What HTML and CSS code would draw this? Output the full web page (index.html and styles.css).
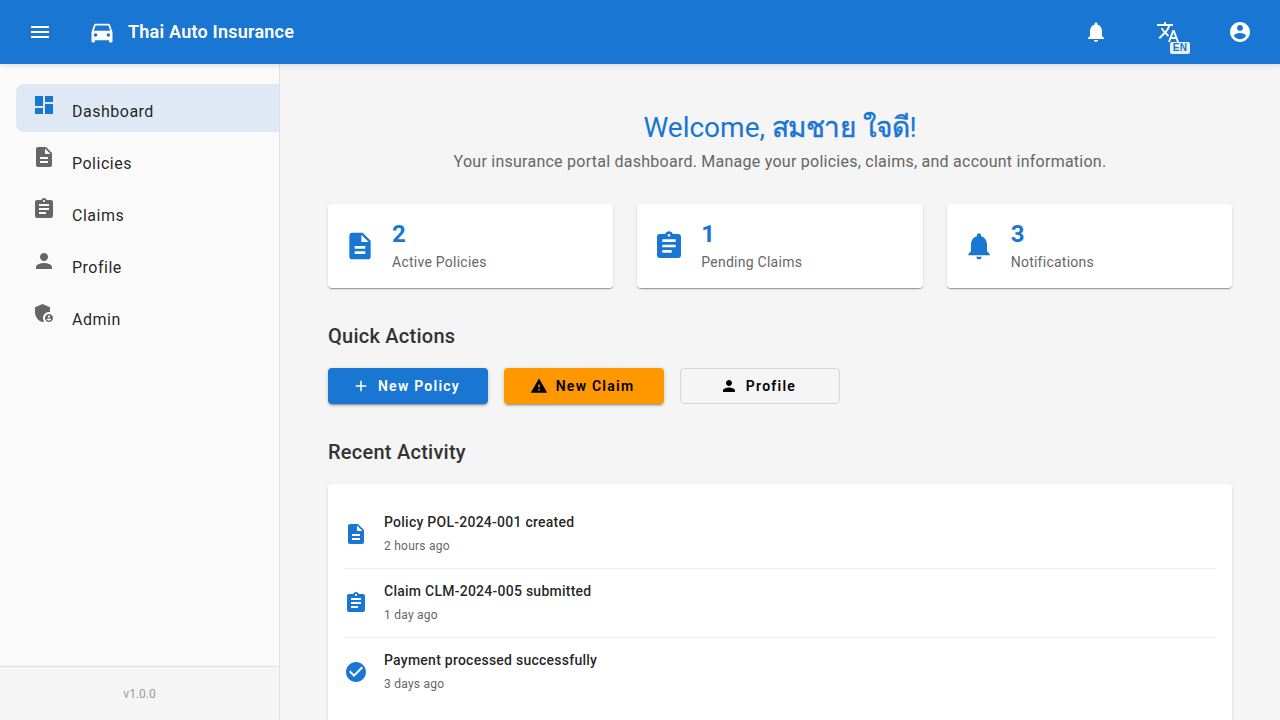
FILE: index.html
```html
<!DOCTYPE html>
<html lang="en">
<head>
<meta charset="utf-8">
<title>Thai Auto Insurance</title>
<link rel="stylesheet" href="styles.css">
</head>
<body>
<svg class="sprite" aria-hidden="true">
  <symbol id="menu" viewBox="0 0 24 24"><path d="M3 18h18v-2H3v2zm0-5h18v-2H3v2zm0-7v2h18V6H3z"/></symbol>
  <symbol id="car" viewBox="0 0 24 24"><path d="M18.92 6.01C18.72 5.42 18.16 5 17.5 5h-11c-.66 0-1.21.42-1.42 1.01L3 12v8c0 .55.45 1 1 1h1c.55 0 1-.45 1-1v-1h12v1c0 .55.45 1 1 1h1c.55 0 1-.45 1-1v-8l-2.08-5.99zM6.500 16c-.83 0-1.500-.67-1.500-1.500S5.670 13 6.500 13s1.500.67 1.500 1.500S7.330 16 6.500 16zm11 0c-.83 0-1.500-.67-1.500-1.500s.67-1.500 1.500-1.500 1.500.67 1.500 1.500-.67 1.500-1.500 1.500zM5 11l1.500-4.500h11L19 11H5z"/></symbol>
  <symbol id="bell" viewBox="0 0 24 24"><path d="M12 22c1.1 0 2-.9 2-2h-4c0 1.1.89 2 2 2zm6-6v-5c0-3.070-1.640-5.640-4.500-6.320V4c0-.83-.67-1.500-1.500-1.500s-1.500.67-1.500 1.500v.68C7.630 5.360 6 7.920 6 11v5l-2 2v1h16v-1l-2-2z"/></symbol>
  <symbol id="translate" viewBox="0 0 24 24"><path d="M12.870 15.070l-2.540-2.510.03-.03c1.740-1.940 2.980-4.170 3.710-6.530H17V4h-7V2H8v2H1v1.990h11.170C11.500 7.920 10.440 9.750 9 11.350 8.070 10.320 7.300 9.190 6.690 8h-2c.73 1.630 1.730 3.170 2.980 4.560l-5.090 5.020L4 19l5-5 3.110 3.110.76-2.040zM18.500 10h-2L12 22h2l1.120-3h4.750L21 22h2l-4.500-12zm-2.620 7l1.620-4.330L19.120 17h-3.240z"/></symbol>
  <symbol id="account" viewBox="0 0 24 24"><path d="M12 2C6.480 2 2 6.480 2 12s4.480 10 10 10 10-4.480 10-10S17.520 2 12 2zm0 3c1.660 0 3 1.340 3 3s-1.340 3-3 3-3-1.340-3-3 1.340-3 3-3zm0 14.200c-2.500 0-4.710-1.280-6-3.220.03-1.990 4-3.080 6-3.080 1.990 0 5.970 1.090 6 3.080-1.290 1.940-3.500 3.220-6 3.220z"/></symbol>
  <symbol id="dashboard" viewBox="0 0 24 24"><path d="M3 13h8V3H3v10zm0 8h8v-6H3v6zm10 0h8V11h-8v10zm0-18v6h8V3h-8z"/></symbol>
  <symbol id="document" viewBox="0 0 24 24"><path d="M14 2H6c-1.100 0-1.990.9-1.990 2L4 20c0 1.100.89 2 1.990 2H18c1.100 0 2-.9 2-2V8l-6-6zm2 16H8v-2h8v2zm0-4H8v-2h8v2zm-3-5V3.500L18.500 9H13z"/></symbol>
  <symbol id="clipboard" viewBox="0 0 24 24"><path d="M19 3h-4.180C14.400 1.840 13.300 1 12 1c-1.300 0-2.400.84-2.820 2H5c-1.100 0-2 .9-2 2v14c0 1.100.9 2 2 2h14c1.100 0 2-.9 2-2V5c0-1.100-.9-2-2-2zm-7 0c.55 0 1 .45 1 1s-.45 1-1 1-1-.45-1-1 .45-1 1-1zm2 14H7v-2h7v2zm3-4H7v-2h10v2zm0-4H7V7h10v2z"/></symbol>
  <symbol id="person" viewBox="0 0 24 24"><path d="M12 12c2.210 0 4-1.790 4-4s-1.790-4-4-4-4 1.790-4 4 1.790 4 4 4zm0 2c-2.670 0-8 1.340-8 4v2h16v-2c0-2.660-5.330-4-8-4z"/></symbol>
  <symbol id="admin" viewBox="0 0 24 24"><path d="M17 11c.34 0 .67.04 1 .09V6.270L10.500 3 3 6.270v4.910c0 4.540 3.200 8.790 7.500 9.820.55-.13 1.080-.32 1.600-.55-.69-.98-1.100-2.170-1.100-3.450 0-3.310 2.690-6 6-6z"/><path d="M17 13c-2.210 0-4 1.790-4 4s1.790 4 4 4 4-1.790 4-4-1.790-4-4-4zm0 1.380c.62 0 1.120.51 1.120 1.120s-.51 1.120-1.120 1.120-1.120-.51-1.120-1.120.5-1.120 1.120-1.120zm0 5.370c-.93 0-1.740-.46-2.240-1.170.05-.72 1.510-1.080 2.240-1.080s2.190.36 2.240 1.080c-.5.71-1.310 1.170-2.240 1.170z"/></symbol>
  <symbol id="plus" viewBox="0 0 24 24"><path d="M19 13h-6v6h-2v-6H5v-2h6V5h2v6h6v2z"/></symbol>
  <symbol id="warning" viewBox="0 0 24 24"><path d="M1 21h22L12 2 1 21zm12-3h-2v-2h2v2zm0-4h-2v-4h2v4z"/></symbol>
  <symbol id="check" viewBox="0 0 24 24"><path d="M12 2C6.480 2 2 6.480 2 12s4.480 10 10 10 10-4.480 10-10S17.520 2 12 2zm-2 15l-5-5 1.410-1.410L10 14.170l7.590-7.590L19 8l-9 9z"/></symbol>
</svg>

<div class="app">
  <header class="toolbar">
    <button class="icon-button" aria-label="Menu"><svg class="icon"><use href="#menu"/></svg></button>
    <div class="brand"><svg class="icon brand-icon"><use href="#car"/></svg><span>Thai Auto Insurance</span></div>
    <div class="toolbar-actions">
      <button class="icon-button" aria-label="Notifications"><svg class="icon"><use href="#bell"/></svg></button>
      <button class="icon-button" aria-label="Language"><svg class="icon"><use href="#translate"/></svg><span class="lang-badge">EN</span></button>
      <button class="icon-button" aria-label="Account"><svg class="icon"><use href="#account"/></svg></button>
    </div>
  </header>

  <div class="body">
    <aside class="sidebar">
      <nav class="nav">
        <a class="nav-item active"><svg class="icon"><use href="#dashboard"/></svg><span>Dashboard</span></a>
        <a class="nav-item"><svg class="icon"><use href="#document"/></svg><span>Policies</span></a>
        <a class="nav-item"><svg class="icon"><use href="#clipboard"/></svg><span>Claims</span></a>
        <a class="nav-item"><svg class="icon"><use href="#person"/></svg><span>Profile</span></a>
        <a class="nav-item"><svg class="icon"><use href="#admin"/></svg><span>Admin</span></a>
      </nav>
      <div class="sidebar-footer">v1.0.0</div>
    </aside>

    <main class="content">
      <section class="welcome">
        <h1>Welcome, <span class="user-name" lang="th">สมชาย ใจดี</span>!</h1>
        <p>Your insurance portal dashboard. Manage your policies, claims, and account information.</p>
      </section>

      <section class="stats">
        <div class="card stat"><svg class="icon stat-icon"><use href="#document"/></svg><div><div class="stat-value">2</div><div class="stat-label">Active Policies</div></div></div>
        <div class="card stat"><svg class="icon stat-icon"><use href="#clipboard"/></svg><div><div class="stat-value">1</div><div class="stat-label">Pending Claims</div></div></div>
        <div class="card stat"><svg class="icon stat-icon"><use href="#bell"/></svg><div><div class="stat-value">3</div><div class="stat-label">Notifications</div></div></div>
      </section>

      <section class="section">
        <h2>Quick Actions</h2>
        <div class="actions">
          <button class="button primary"><svg class="icon"><use href="#plus"/></svg><span>New Policy</span></button>
          <button class="button accent"><svg class="icon"><use href="#warning"/></svg><span>New Claim</span></button>
          <button class="button outlined"><svg class="icon"><use href="#person"/></svg><span>Profile</span></button>
        </div>
      </section>

      <section class="section">
        <h2>Recent Activity</h2>
        <div class="card activity">
          <div class="activity-item"><svg class="icon"><use href="#document"/></svg><div><div class="activity-title">Policy POL-2024-001 created</div><div class="activity-time">2 hours ago</div></div></div>
          <div class="activity-item"><svg class="icon"><use href="#clipboard"/></svg><div><div class="activity-title">Claim CLM-2024-005 submitted</div><div class="activity-time">1 day ago</div></div></div>
          <div class="activity-item"><svg class="icon"><use href="#check"/></svg><div><div class="activity-title">Payment processed successfully</div><div class="activity-time">3 days ago</div></div></div>
        </div>
      </section>
    </main>
  </div>
</div>
</body>
</html>
```
FILE: styles.css
```css
* { box-sizing: border-box; }

body {
  margin: 0;
  font-family: Roboto, "Noto Sans", sans-serif;
  background: #f5f5f5;
  color: rgba(0, 0, 0, 0.87);
  overflow: hidden;
}

h1, h2, p { margin: 0; }
button { font: inherit; }

.sprite { display: none; }

.icon {
  display: block;
  flex: none;
  width: 24px;
  height: 24px;
  fill: currentColor;
}

.app {
  display: flex;
  flex-direction: column;
  height: 100vh;
}

.toolbar {
  display: flex;
  align-items: center;
  flex: none;
  height: 64px;
  padding: 0 16px;
  background: #1976d2;
  color: #fff;
  box-shadow: 0 2px 4px rgba(0, 0, 0, 0.1);
  z-index: 1;
}

.icon-button {
  position: relative;
  display: flex;
  align-items: center;
  justify-content: center;
  width: 48px;
  height: 48px;
  padding: 0;
  border: 0;
  background: none;
  color: inherit;
}

.brand {
  display: flex;
  align-items: center;
  gap: 12px;
  margin-left: 24px;
  font-size: 18px;
  font-weight: 600;
  line-height: 28px;
  letter-spacing: 0.22px;
}

.brand-icon { width: 28px; height: 28px; }

.toolbar-actions {
  display: flex;
  gap: 24px;
  margin-left: auto;
}

.lang-badge {
  position: absolute;
  right: 2px;
  bottom: 2px;
  width: 20px;
  padding: 1px 0;
  border-radius: 2px;
  background: rgba(255, 255, 255, 0.9);
  color: #1976d2;
  font-family: "Liberation Sans", Arial, sans-serif;
  font-size: 10px;
  font-weight: 700;
  line-height: 10px;
  letter-spacing: 0.2px;
  text-align: center;
}

.body {
  display: flex;
  flex: 1;
  min-height: 0;
}

.sidebar {
  display: flex;
  flex-direction: column;
  flex: none;
  width: 280px;
  border-right: 1px solid #e0e0e0;
  background: #fafafa;
}

.nav {
  display: flex;
  flex-direction: column;
  flex: 1;
  gap: 4px;
  padding: 20px 0 0 16px;
}

.nav-item {
  display: flex;
  align-items: flex-start;
  gap: 16px;
  height: 48px;
  padding: 9px 16px 0;
  border-radius: 8px 0 0 8px;
  font-size: 16px;
  line-height: 24px;
  letter-spacing: 0.5px;
}

.nav-item span { padding-top: 7px; }
.nav-item .icon { color: #666; }
.nav-item.active { background: #dfe9f5; }
.nav-item.active .icon { color: #1976d2; }

.sidebar-footer {
  height: 54px;
  border-top: 1px solid #e0e0e0;
  background: #f5f5f5;
  color: #999;
  font-size: 12px;
  line-height: 55px;
  text-align: center;
}

.content {
  flex: 1;
  min-width: 0;
  padding: 44px 48px 0;
}

.welcome { text-align: center; }

.welcome h1 {
  height: 40px;
  color: #1976d2;
  font-size: 28px;
  font-weight: 400;
  line-height: 40px;
}

.user-name {
  letter-spacing: -0.5px;
  word-spacing: 1px;
  -webkit-text-stroke: 0.5px currentColor;
}

.welcome p {
  margin-top: 2px;
  color: #666;
  font-size: 16px;
  line-height: 24px;
  letter-spacing: 0.25px;
}

.stats {
  display: grid;
  grid-template-columns: repeat(3, 1fr);
  gap: 24px;
  margin-top: 30px;
}

.card {
  border-radius: 4px;
  background: #fff;
  box-shadow: 0 2px 1px -1px rgba(0, 0, 0, 0.2), 0 1px 1px rgba(0, 0, 0, 0.14), 0 1px 3px rgba(0, 0, 0, 0.12);
}

.stat {
  display: flex;
  align-items: center;
  gap: 16px;
  height: 84px;
  padding: 0 16px;
}

.stat-icon { width: 32px; height: 32px; color: #1976d2; }

.stat-value {
  color: #1976d2;
  font-size: 24px;
  font-weight: 700;
  line-height: 32px;
}

.stat-label {
  margin: 2px 0;
  color: #666;
  font-size: 14px;
  line-height: 20px;
  letter-spacing: 0.25px;
}

.section { margin-top: 32px; }

.section h2 {
  color: #333;
  font-size: 20px;
  font-weight: 500;
  line-height: 32px;
  letter-spacing: 0.25px;
}

.actions { display: flex; gap: 16px; margin-top: 16px; }

.button {
  display: flex;
  align-items: center;
  justify-content: center;
  gap: 8px;
  width: 160px;
  height: 36px;
  padding: 0 16px;
  border: 0;
  border-radius: 4px;
  font-size: 14px;
  font-weight: 600;
  letter-spacing: 1.25px;
  box-shadow: 0 3px 1px -2px rgba(0, 0, 0, 0.2), 0 2px 2px rgba(0, 0, 0, 0.14), 0 1px 5px rgba(0, 0, 0, 0.12);
}

.button .icon { width: 18px; height: 18px; margin-left: -4px; }
.primary { background: #1976d2; color: #fff; }
.accent { background: #ff9800; color: #000; }
.outlined { border: 1px solid #d6d6d6; background: transparent; color: #000; box-shadow: none; }

.activity { height: 240px; margin-top: 16px; padding: 16px; }

.activity-item {
  display: flex;
  align-items: center;
  gap: 16px;
  height: 69px;
  border-bottom: 1px solid #eee;
}

.activity-item:last-child { border-bottom-color: transparent; }
.activity-item .icon { color: #1976d2; }

.activity-title {
  font-size: 14px;
  font-weight: 500;
  line-height: 20px;
  letter-spacing: 0.25px;
}

.activity-time {
  margin-top: 4px;
  color: #666;
  font-size: 12px;
  line-height: 20px;
  letter-spacing: 0.25px;
}
```
